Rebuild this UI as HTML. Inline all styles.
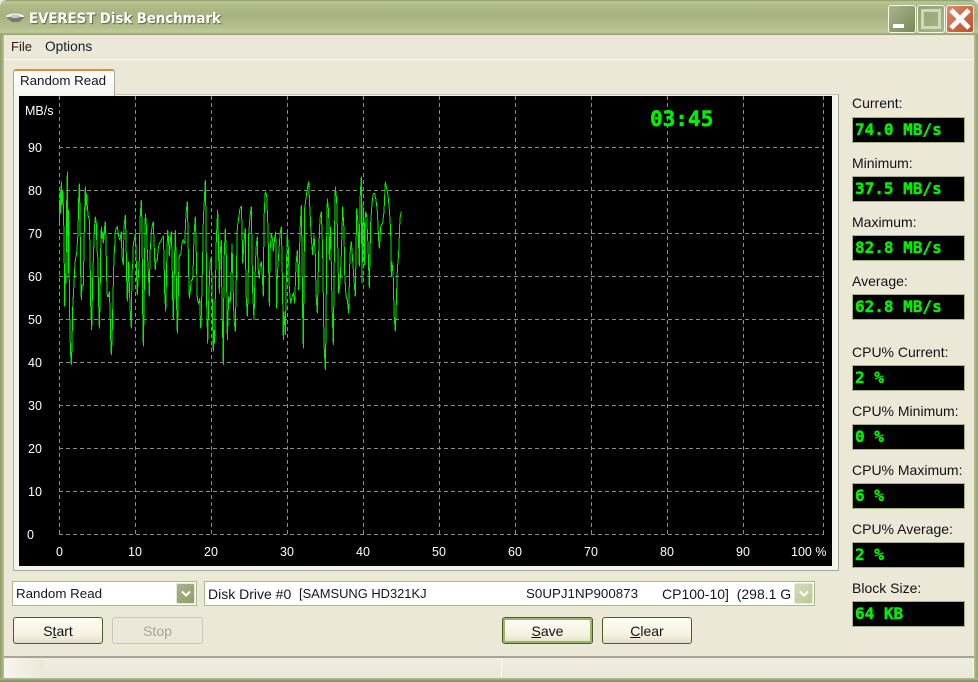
<!DOCTYPE html>
<html><head><meta charset="utf-8"><style>
html,body{margin:0;padding:0;background:#a8b585}
#w{position:relative;width:978px;height:682px;overflow:hidden;background:#ebe8d8;font:14px "Liberation Sans",sans-serif;color:#000}
#w div{position:absolute;box-sizing:border-box}
.t{white-space:pre;line-height:16px}
#tb{left:0;top:0;width:978px;height:35px;background:linear-gradient(#8c9a68 0,#bcc894 2px,#aebb88 5px,#a6b380 16px,#b0bd8c 26px,#bfca98 32px,#8f9c6a 35px);border-radius:7px 7px 0 0}
.wb{width:28px;height:28px;top:5px;border:1px solid #f4f6ea;border-radius:3px}
.val{left:852px;width:113px;height:26px;background:#000;border:1px solid #a3b384;color:#00f000;font:bold 16px/24px "DejaVu Sans Mono",monospace;padding-left:2px;white-space:pre;-webkit-text-stroke:.4px #00f000}
.lab{left:852px;color:#111}
.cb{height:25px;background:#fff;border:1px solid #a9ba8a}
.ar{width:19px;height:21px;top:1px;border:1px solid #e4e8d2;border-radius:2px}
.btn{height:27px;top:617px;width:90px;border:1px solid #4a6020;border-radius:3px;background:linear-gradient(#fffff6,#f4f0e0 70%,#e4dcc2);text-align:center;line-height:26px;color:#111}
u{text-decoration:underline}
.g{color:#fff;position:absolute;font-size:12.5px;line-height:14px;white-space:pre}
.n{font-size:13.35px}
</style></head><body><div id="w">
<div id="tb"></div>
<div style="left:0;top:35px;width:4px;height:647px;background:linear-gradient(90deg,#8f9c6a,#b5c28e)"></div>
<div style="right:0;top:35px;width:4px;height:647px;background:linear-gradient(90deg,#b5c28e,#8f9c6a)"></div>
<div style="left:0;top:678px;width:978px;height:4px;background:linear-gradient(#b5c28e,#77845a)"></div>
<svg style="position:absolute;left:5px;top:12px" width="22" height="13"><ellipse cx="10" cy="4.5" rx="9" ry="3" fill="#f0f0f0"/><path d="M1 5 L7 10 H14 L20 5 Z" fill="#77786f"/><ellipse cx="10" cy="4.5" rx="5" ry="1.6" fill="#c8c8c8"/></svg>
<div class="t" style="left:29px;top:11px;color:#fff;font-weight:bold;font-size:14.5px;font-family:'DejaVu Sans',sans-serif;width:240px;text-shadow:1px 1px 1px #5a6438"><span style="display:inline-block;transform:scaleX(.915);transform-origin:0 0">EVEREST Disk Benchmark</span></div>
<div class="wb" style="left:888px;background:linear-gradient(135deg,#a9b58c,#79875a)"><div style="left:4px;top:18px;width:11px;height:4px;background:#fff"></div></div>
<div class="wb" style="left:917px;background:linear-gradient(135deg,#93a274,#a8b58a)"><div style="left:3px;top:3px;width:20px;height:20px;border:3px solid #cfd8b4"></div></div>
<div class="wb" style="left:946px;background:linear-gradient(135deg,#dc8a66,#b94f2c)"><svg style="position:absolute;left:0;top:0" width="26" height="26"><path d="M4 4 L22 22 M22 4 L4 22" stroke="#fff" stroke-width="5" /></svg></div>
<div class="t" style="left:11px;top:39px;font-size:13px;color:#2a1a10">File</div>
<div class="t" style="left:45px;top:39px;font-size:13.7px;color:#10202a">Options</div>
<div style="left:4px;top:59px;width:970px;height:1px;background:#fbfaf4"></div>

<div style="left:13px;top:94px;width:826px;height:477px;background:#f4f3ec;border:1px solid #a2a89c;border-left-color:#a8aeaa;border-top-color:#c0c2b8"></div>
<div style="left:13px;top:69px;width:102px;height:27px;background:linear-gradient(#fff,#f5f5ef);border:1px solid #a2a89c;border-bottom:0;border-top:2px solid #e08a40;border-radius:3px 3px 0 0"></div>
<div class="t n" style="left:20px;top:73px;color:#101820">Random Read</div>

<div style="left:19px;top:96px;width:813px;height:470px;background:#000"></div>
<svg style="position:absolute;left:0;top:0" width="978" height="682">
<g stroke="#8c8c8c" stroke-width="1" stroke-dasharray="4 3" shape-rendering="crispEdges" fill="none">
<path d="M59.5 96V534M135.5 96V534M211.5 96V534M287.5 96V534M363.5 96V534M439.5 96V534M515.5 96V534M591.5 96V534M667.5 96V534M743.5 96V534M823.5 96V534"/>
<path d="M59 147.5H824M59 190.5H824M59 233.5H824M59 276.5H824M59 319.5H824M59 362.5H824M59 405.5H824M59 448.5H824M59 491.5H824M59 534.5H824"/>
</g>
<g transform="translate(50,160) scale(.33333)" fill="none" stroke="#00f000" stroke-width="3" shape-rendering="crispEdges">
<polyline points="28,195 28,165 30,95 32,160 34,65 36,135 38,90 40,135 42,230 44,440 46,340 48,370 50,135 52,35 54,340 56,150 58,385 60,525 62,585 64,615 66,555 68,445 72,370 74,330 76,300 80,280 84,220 86,120 88,70 90,160 92,335 94,420 96,375 100,375 104,150 106,80 108,150 110,100 112,140 115,170 118,180 120,270 122,430 125,510 126,460 128,360 131,270 133,210 136,170 139,190 141,270 144,300 146,430 148,505 150,430 152,275 154,200 156,235 158,215 160,250 162,235 164,200 166,185 168,245 170,355 172,410 175,410 178,395 180,445 182,535 184,585 186,540 188,460 190,370 192,290 194,265 196,210 200,205 202,200 206,230 210,240 214,215 216,290 220,315 222,200 226,165 228,230 230,355 232,425 234,385 236,305 240,440 244,505 246,330 248,320 250,250 254,235 256,220 258,270 260,355 262,405 264,365 268,300 270,180 274,120 276,200 278,450 280,560 282,460 284,280 286,160 288,180 290,215 292,275 296,360 298,410 300,280 304,220 306,200 310,185 312,240 314,300 316,330 318,300 322,300 324,270 328,250 332,245 336,235 340,230 342,290 344,395 347,455 349,370 351,270 353,210 355,230 358,290 361,240 364,215 366,285 368,410 370,480 374,280 376,210 378,290 380,440 382,520 384,450 386,345 388,285 392,285 396,250 400,240 404,250 408,160 412,125 414,220 416,340 418,415 420,400 424,360 428,360 430,310 432,225 436,170 438,240 442,420 446,430 449,415 452,505 454,465 458,290 460,180 464,100 466,60 468,180 470,430 473,550 476,430 480,310 484,290 486,365 488,500 490,575 492,510 494,550 496,400 499,235 503,150 505,230 508,400 510,290 514,240 516,460 518,520 520,615 522,305 526,205 529,290 532,540 536,410 540,430"/>
</g>
<g transform="translate(230,160) scale(.33333)" fill="none" stroke="#00f000" stroke-width="3" shape-rendering="crispEdges">
<polyline points="0,430 2,405 6,250 8,330 12,480 16,515 18,400 22,200 26,175 30,145 34,140 36,195 38,310 42,245 46,205 48,400 52,470 54,410 56,225 60,170 64,140 68,395 72,480 74,390 78,265 82,230 84,325 88,355 90,320 94,305 96,330 100,410 102,175 106,95 110,105 114,205 118,440 120,275 124,220 128,240 130,275 134,235 137,215 140,445 142,345 146,285 150,225 154,200 156,290 160,540 162,455 166,525 170,295 172,220 175,265 178,385 182,430 186,410 190,400 194,430 198,315 202,270 206,390 210,215 214,135 216,280 218,460 220,565 224,145 228,115 232,85 236,65 240,155 244,235 248,285 252,225 256,285 258,400 262,460 266,280 270,175 274,155 278,275 282,550 286,630 288,505 290,245 292,115 296,155 298,300 302,200 306,435 310,555 314,200 316,80 320,120 322,200 324,300 326,400 330,370 334,285 338,140 342,210 344,340 348,410 352,420 356,460 360,280 364,245 368,300 372,360 376,410 380,145 384,190 388,320 390,120 394,50 396,370 399,130 402,205 404,315 406,155 410,165 414,260 418,385 422,190 426,130 430,100 434,100 438,120 442,155 446,240 448,265 452,200 458,190 462,155 466,65 470,85 474,105 478,150 482,210 484,350 486,305 490,355 492,460 496,515 498,460 502,330 506,280 510,175 514,155"/>
</g>
</svg>
<div class="g" style="left:25px;top:104px">MB/s</div>
<div class="g" style="left:28px;top:141px">90</div>
<div class="g" style="left:28px;top:184px">80</div>
<div class="g" style="left:28px;top:227px">70</div>
<div class="g" style="left:28px;top:270px">60</div>
<div class="g" style="left:28px;top:313px">50</div>
<div class="g" style="left:28px;top:356px">40</div>
<div class="g" style="left:28px;top:399px">30</div>
<div class="g" style="left:28px;top:442px">20</div>
<div class="g" style="left:28px;top:485px">10</div>
<div class="g" style="left:27px;top:528px">0</div>
<div class="g" style="left:56px;top:545px">0</div>
<div class="g" style="left:128px;top:545px">10</div>
<div class="g" style="left:204px;top:545px">20</div>
<div class="g" style="left:280px;top:545px">30</div>
<div class="g" style="left:356px;top:545px">40</div>
<div class="g" style="left:432px;top:545px">50</div>
<div class="g" style="left:508px;top:545px">60</div>
<div class="g" style="left:584px;top:545px">70</div>
<div class="g" style="left:660px;top:545px">80</div>
<div class="g" style="left:736px;top:545px">90</div>
<div class="g" style="left:791px;top:545px">100 %</div>
<div style="left:650px;top:106px;color:#00f000;font:bold 21px/26px 'DejaVu Sans Mono',monospace;-webkit-text-stroke:.5px #00f000">03:45</div>

<div class="t lab" style="top:95px">Current:</div><div class="val" style="top:117px">74.0 MB/s</div>
<div class="t lab" style="top:155px">Minimum:</div><div class="val" style="top:176px">37.5 MB/s</div>
<div class="t lab" style="top:214px">Maximum:</div><div class="val" style="top:235px">82.8 MB/s</div>
<div class="t lab" style="top:273px">Average:</div><div class="val" style="top:294px">62.8 MB/s</div>
<div class="t lab" style="top:344px">CPU% Current:</div><div class="val" style="top:365px">2 %</div>
<div class="t lab" style="top:403px">CPU% Minimum:</div><div class="val" style="top:424px">0 %</div>
<div class="t lab" style="top:462px">CPU% Maximum:</div><div class="val" style="top:483px">6 %</div>
<div class="t lab" style="top:521px">CPU% Average:</div><div class="val" style="top:542px">2 %</div>
<div class="t lab" style="top:580px">Block Size:</div><div class="val" style="top:601px">64 KB</div>

<div class="cb" style="left:12px;top:581px;width:185px"><div class="t n" style="left:3px;top:4px;color:#101820">Random Read</div>
<div class="ar" style="left:163px;background:linear-gradient(135deg,#a8b48c,#8d9c6e)"><svg style="position:absolute;left:4px;top:6px" width="10" height="8"><path d="M1 1.5 L5 5.5 L9 1.5" fill="none" stroke="#fff" stroke-width="2"/></svg></div></div>
<div class="cb" style="left:204px;top:581px;width:611px;overflow:hidden"><div class="t" style="left:3px;top:4px;color:#101820">Disk Drive #0</div><div class="t" style="left:94px;top:4px;color:#101820;font-size:12.9px">[SAMSUNG HD321KJ</div><div class="t n" style="left:321px;top:4px;color:#101820">S0UPJ1NP900873</div><div class="t" style="left:457px;top:4px;color:#101820">CP100-10]  (298.1 G</div>
<div class="ar" style="left:589px;background:linear-gradient(135deg,#d4dcb6,#bcc898)"><svg style="position:absolute;left:4px;top:6px" width="10" height="8"><path d="M1 1.5 L5 5.5 L9 1.5" fill="none" stroke="#fff" stroke-width="2"/></svg></div></div>

<div class="btn" style="left:13px">S<u>t</u>art</div>
<div class="btn" style="left:112px;width:91px;border-color:#c9c7ba;background:#ebe8da;color:#a6a498">Stop</div>
<div class="btn" style="left:502px;width:91px;box-shadow:inset 0 0 0 2px #9ab56e"><u>S</u>ave</div>
<div class="btn" style="left:602px"><u>C</u>lear</div>

<div style="left:4px;top:656px;width:970px;height:2px;background:#a6a595"></div>
<div style="left:4px;top:658px;width:970px;height:20px;background:linear-gradient(#f0eee2,#ebe8d8)"></div>
<div style="left:4px;top:658px;width:40px;height:20px;background:linear-gradient(90deg,#f6f5ef,#ebe8d8)"></div>
<div style="left:501px;top:660px;width:1px;height:17px;background:#fbfaf4"></div>
<div style="left:973px;top:660px;width:1px;height:17px;background:#fbfaf4"></div>
</div></body></html>
